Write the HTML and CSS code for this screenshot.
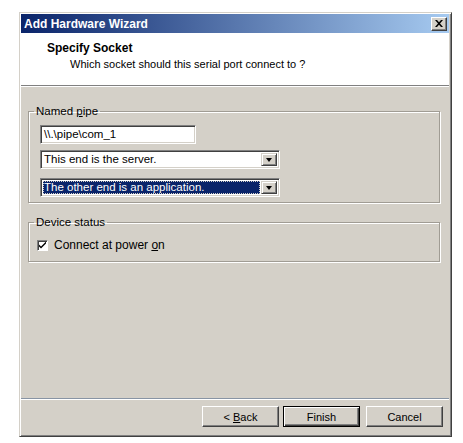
FILE: index.html
```html
<!DOCTYPE html>
<html lang="en">
<head>
    <meta charset="UTF-8">
    <title>Add Hardware Wizard</title>
    <link rel="stylesheet" href="styles.css">
</head>
<body>

    <div class="window">
        <div class="titlebar">
            <span class="title">Add Hardware Wizard</span>
            <span class="close-btn">
                <svg width="8" height="7" viewBox="0 0 8 7">
                    <path d="M0 0h2l2 2.3L6 0h2L5 3.5 8 7H6L4 4.7 2 7H0l3-3.5z" fill="#000"/>
                </svg>
            </span>
        </div>

        <div class="header">
            <div class="head-title">Specify Socket</div>
            <div class="head-sub">Which socket should this serial port connect to ?</div>
        </div>

        <div class="content">
            <fieldset class="group group-pipe">
                <legend>Named <u>p</u>ipe</legend>
                <div class="textbox">\\.\pipe\com_1</div>
                <div class="combo">
                    <span class="combo-text">This end is the server.</span>
                    <span class="combo-btn"><span class="arrow"></span></span>
                </div>
                <div class="combo combo-last">
                    <span class="combo-text selected">The other end is an application.</span>
                    <span class="combo-btn"><span class="arrow"></span></span>
                </div>
            </fieldset>

            <fieldset class="group group-status">
                <legend>Device status</legend>
                <label class="check">
                    <span class="check-box">
                        <svg width="9" height="9" viewBox="0 0 9 9">
                            <path d="M1 3.5l2 2 5-5v2l-5 5-2-2z" fill="#000"/>
                        </svg>
                    </span>
                    <span>Connect at power <u>o</u>n</span>
                </label>
            </fieldset>
        </div>

        <div class="footer">
            <button class="btn">&lt; <u>B</u>ack</button>
            <button class="btn btn-default">Finish</button>
            <button class="btn btn-cancel">Cancel</button>
        </div>
    </div>

</body>
</html>
```

FILE: styles.css
```css
body {
    margin: 0;
    background: #fff;
    font-family: "Liberation Sans", Arial, sans-serif;
    font-size: 11px;
    color: #000;
}

.window {
    margin: 12px 0 0 19px;
    width: 433px;
    height: 425px;
    box-sizing: border-box;
    border: 1px solid;
    border-color: #d4d0c8 #404040 #404040 #d4d0c8;
    box-shadow: inset 1px 1px 0 #fff, inset -1px -1px 0 #808080;
    padding: 1px 2px 2px 1px;
    background: #d4d0c8;
    display: flex;
    flex-direction: column;
}

.titlebar {
    height: 19px;
    background: linear-gradient(90deg, #0a246a, #a6caf0);
    display: flex;
    align-items: center;
    justify-content: space-between;
    padding: 0 2px 0 3px;
}

.title {
    color: #fff;
    font-weight: bold;
    font-size: 12px;
}

.close-btn {
    width: 16px;
    height: 14px;
    box-sizing: border-box;
    background: #d4d0c8;
    border: 1px solid;
    border-color: #fff #404040 #404040 #fff;
    box-shadow: inset -1px -1px 0 #808080;
    display: flex;
    align-items: center;
    justify-content: center;
}

.header {
    height: 53px;
    background: #fff;
    border-bottom: 1px solid #808080;
    box-shadow: 0 1px 0 #fff;
    padding: 8px 0 0 26px;
    box-sizing: border-box;
}

.head-title {
    font-weight: bold;
    font-size: 12px;
}

.head-sub {
    margin: 3px 0 0 23px;
}

.content {
    flex: 1;
    padding: 19px 9px 0 7px;
    font-size: 11.5px;
}

.group {
    margin: 0;
    padding: 7px 10px 0 11px;
    border: 1px solid #a09c94;
    box-shadow: 1px 1px 0 #fff, inset 1px 1px 0 #fff;
}

.group legend {
    padding: 0 2px;
    margin-left: -6px;
    line-height: 13px;
}

.group-pipe {
    height: 98px;
    box-sizing: border-box;
}

.group-status {
    margin-top: 13px;
    height: 46px;
    box-sizing: border-box;
    padding-top: 9px;
    padding-left: 8px;
}

.group-status legend {
    margin-left: -3px;
}

.textbox,
.combo {
    height: 19px;
    box-sizing: border-box;
    background: #fff;
    border: 1px solid;
    border-color: #808080 #fff #fff #808080;
    box-shadow: inset 1px 1px 0 #404040, inset -1px -1px 0 #d4d0c8;
    padding: 2px 3px;
}

.textbox {
    width: 156px;
    line-height: 13px;
}

.combo {
    width: 240px;
    margin-top: 6px;
    display: flex;
    align-items: stretch;
    padding: 2px;
}

.combo-last {
    margin-top: 9px;
}

.combo-text {
    flex: 1;
    line-height: 13px;
    padding-left: 1px;
}

.combo-text.selected {
    background: #0a246a;
    color: #fff;
    outline: 1px dotted #d4d0c8;
    outline-offset: -1px;
    margin-right: 1px;
}

.combo-btn {
    width: 16px;
    box-sizing: border-box;
    background: #d4d0c8;
    border: 1px solid;
    border-color: #d4d0c8 #404040 #404040 #d4d0c8;
    box-shadow: inset 1px 1px 0 #fff, inset -1px -1px 0 #808080;
    display: flex;
    align-items: center;
    justify-content: center;
}

.arrow {
    width: 0;
    height: 0;
    border-left: 3.5px solid transparent;
    border-right: 3.5px solid transparent;
    border-top: 4px solid #000;
}

.check {
    display: flex;
    align-items: center;
    gap: 6px;
    font-size: 12px;
}

.check-box {
    width: 11px;
    height: 11px;
    box-sizing: border-box;
    background: #fff;
    border: 1px solid;
    border-color: #808080 #fff #fff #808080;
    box-shadow: inset 1px 1px 0 #404040;
    display: flex;
    align-items: center;
    justify-content: center;
}

.footer {
    height: 36px;
    border-top: 1px solid #8894a4;
    box-shadow: inset 0 1px 0 #fff;
    display: flex;
    justify-content: flex-end;
    align-items: flex-start;
    padding: 7px 6px 0 0;
    box-sizing: border-box;
}

.btn {
    width: 77px;
    height: 21px;
    margin-left: 4px;
    font-family: "Liberation Sans", Arial, sans-serif;
    font-size: 11px;
    color: #000;
    background: #d4d0c8;
    border: 1px solid;
    border-color: #fff #404040 #404040 #fff;
    box-shadow: inset -1px -1px 0 #808080;
    padding: 0;
}

.btn-default {
    border: 1px solid #000;
    box-shadow: inset 1px 1px 0 #fff, inset -1px -1px 0 #404040, inset -2px -2px 0 #808080;
}

.btn-cancel {
    margin-left: 6px;
}
```
